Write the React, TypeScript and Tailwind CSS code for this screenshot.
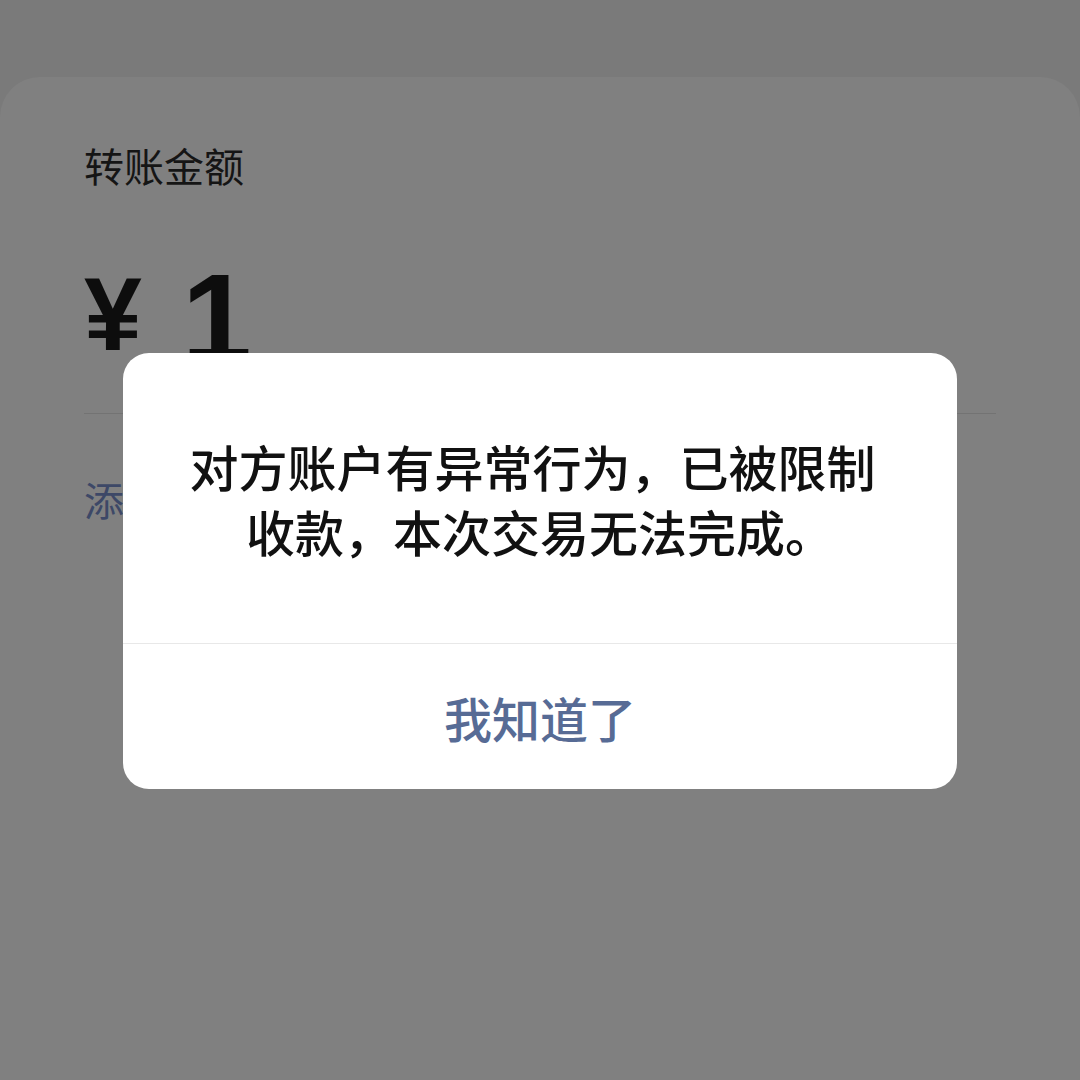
import React from 'react';

const cjk = '"Noto Sans CJK SC", "Noto Sans", sans-serif';

const App: React.FC = () => {
    return (
        <div className="min-h-[1080px] w-[1080px] bg-[#7a7a7a] pt-[77px] relative overflow-hidden" style={{ fontFamily: cjk }}>
            {/* transfer page behind the mask */}
            <div className="bg-[#808080] rounded-t-[40px] min-h-[1003px] px-[84px] pt-[64px]">
                <div className="text-[40px] leading-[48px] text-[#151515]">转账金额</div>
                <div className="flex items-end mt-[83px] h-[110px] text-[#0d0d0d] font-bold" style={{ fontFamily: '"Liberation Sans", Arial, sans-serif' }}>
                    <span className="text-[104px] leading-none mb-[16px]">¥</span>
                    <span className="text-[126px] leading-none ml-[40px]">1</span>
                </div>
                <div className="mt-[31px] h-px bg-[#737373]" />
                <div className="mt-[61px] text-[40px] leading-[48px] text-[#3d4867]">添加转账说明</div>
            </div>

            {/* alert dialog */}
            <div className="absolute left-[123px] top-[353px] w-[834px] rounded-[26px] bg-white overflow-hidden">
                <div className="px-[40px] pt-[80px] pb-[80px] text-center text-[49px] leading-[65px] font-medium text-[#111111]">
                    <div className="pr-[15px]">对方账户有异常行为，已被限制</div>
                    <div>收款，本次交易无法完成。</div>
                </div>
                <div className="h-px bg-[#e8e8e8]" />
                <div className="h-[145px] flex items-center justify-center text-[48px] font-medium text-[#576b95]">
                    我知道了
                </div>
            </div>
        </div>
    );
};

export default App;
